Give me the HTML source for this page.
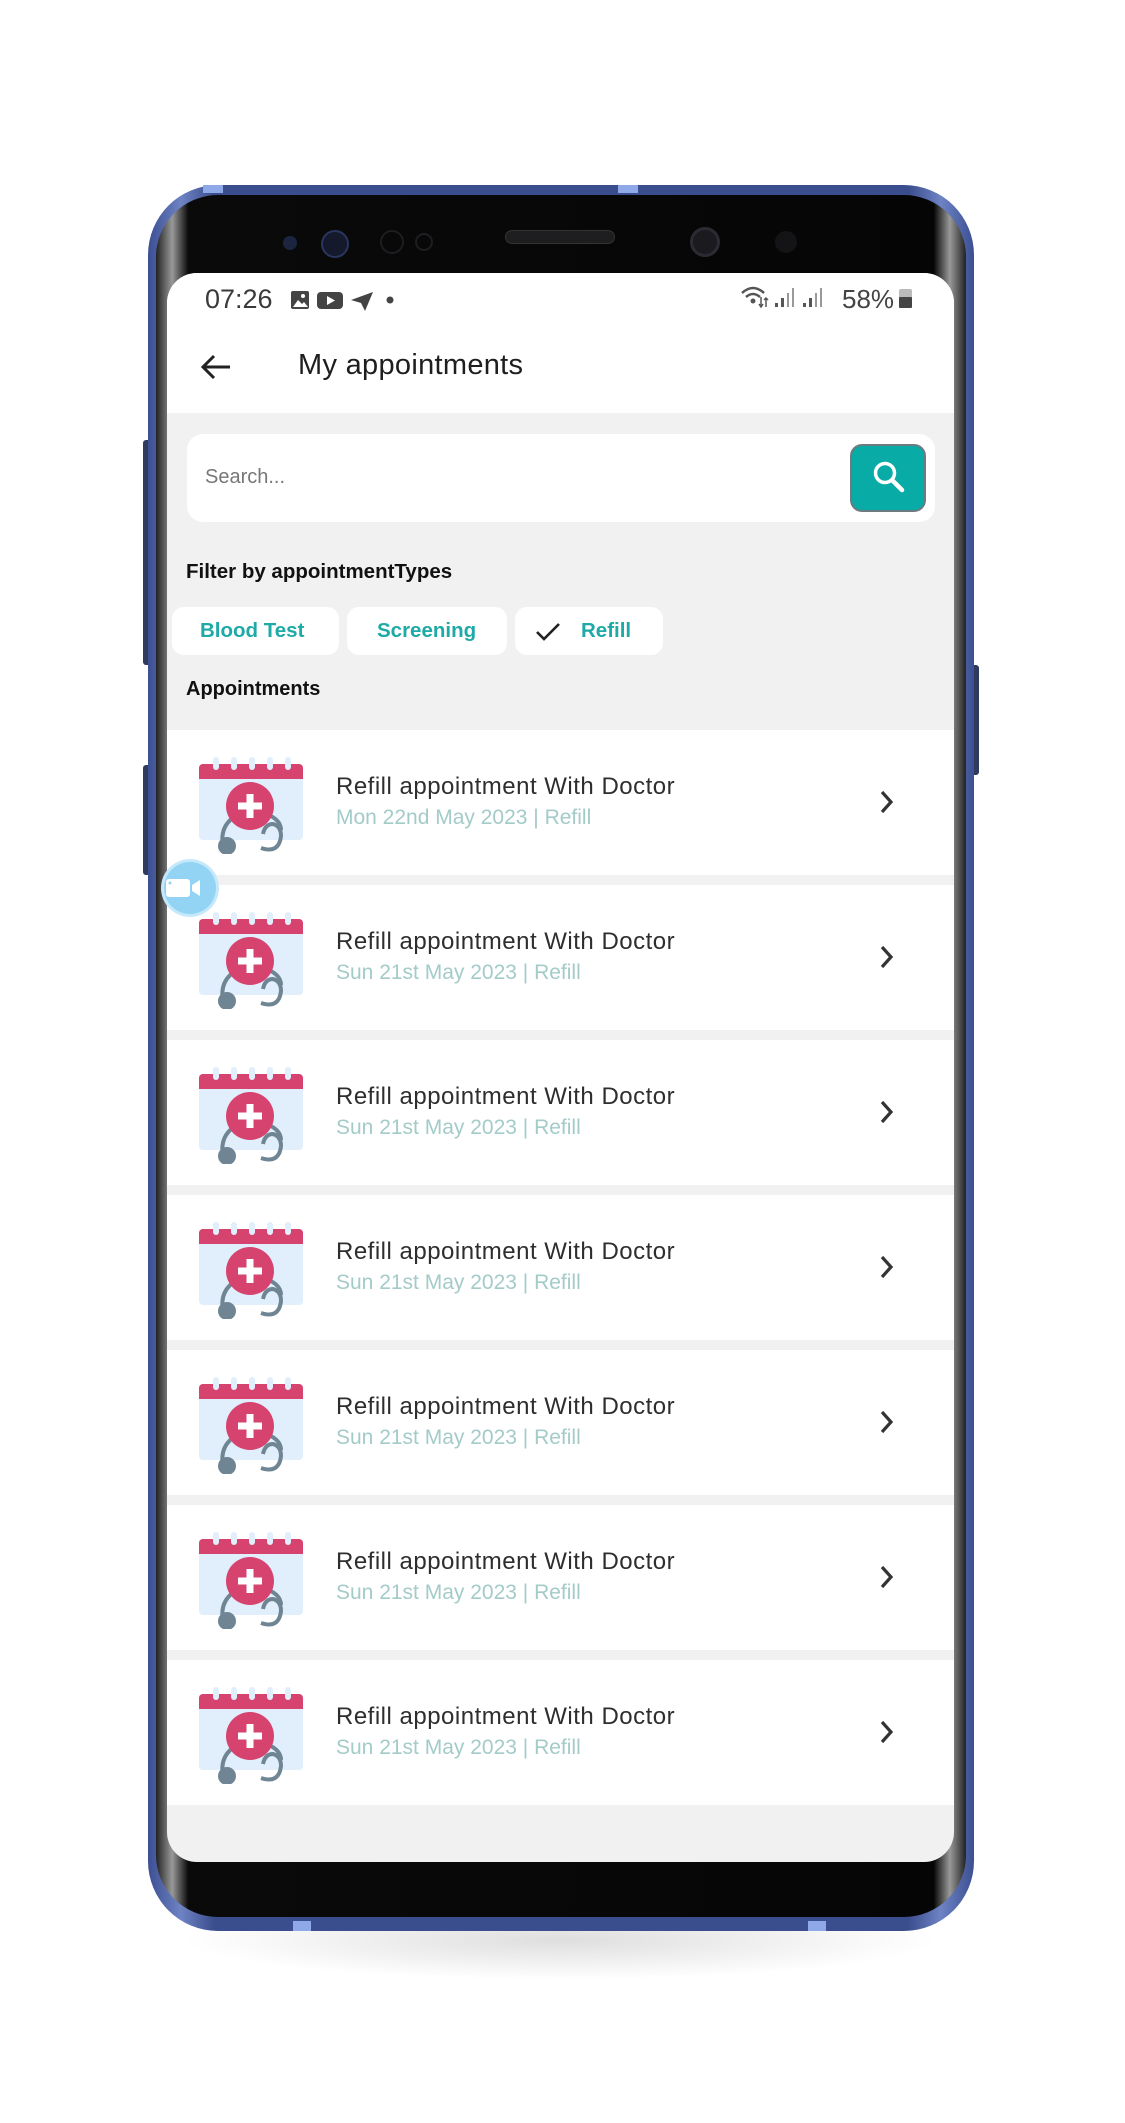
<!DOCTYPE html>
<html><head><meta charset="utf-8">
<style>
*{margin:0;padding:0;box-sizing:border-box}
body{width:1125px;height:2123px;background:#fff;position:relative;overflow:hidden;font-family:"Liberation Sans",sans-serif}
.shadow{position:absolute;left:180px;top:1900px;width:760px;height:80px;border-radius:50%;background:radial-gradient(ellipse at center,rgba(0,0,0,.13),rgba(0,0,0,0) 70%)}
.phone{position:absolute;left:148px;top:185px;width:826px;height:1746px;border-radius:70px;background:linear-gradient(90deg,#3b4f92,#6e83c4 4%,#3a4d8d 8%,#3a4d8d 92%,#6e83c4 96%,#3b4f92);}
.bez{position:absolute;left:8px;top:10px;right:8px;bottom:14px;border-radius:62px;background:linear-gradient(90deg,#222,#999 2%,#0a0a0a 4%,#050505 96%,#999 98%,#222);}
.btn{position:absolute;background:#2e3a5e;border-radius:3px}
.screen{position:absolute;left:167px;top:273px;width:787px;height:1589px;border-radius:30px;background:#f1f1f1;overflow:hidden}
.status{position:absolute;left:0;top:0;width:100%;height:140px;background:#fff}
.t{position:absolute;white-space:nowrap}
.item{position:absolute;left:0;width:787px;height:145px;background:#fff}
.item .ti{position:absolute;left:169px;top:43px;font-size:24px;color:#2e2e2e;letter-spacing:.5px}
.item .su{position:absolute;left:169px;top:76px;font-size:21px;color:#a3cbc8}
.item svg.ic{position:absolute;left:32px;top:24px}
.item svg.ch{position:absolute;left:710px;top:58px}
.chip{position:absolute;top:334px;height:48px;background:#fff;border-radius:12px;color:#1eaaa6;font-weight:bold;font-size:20.5px;line-height:48px}
</style></head><body>
<div class="shadow"></div>
<div class="btn" style="left:143px;top:440px;width:8px;height:225px"></div>
<div class="btn" style="left:143px;top:765px;width:8px;height:110px"></div>
<div class="btn" style="left:971px;top:665px;width:8px;height:110px"></div>
<div class="phone"><div class="bez"></div>
<div style="position:absolute;left:55px;top:0;width:20px;height:8px;background:#8fa8e8"></div>
<div style="position:absolute;left:470px;top:0;width:20px;height:8px;background:#8fa8e8"></div>
<div style="position:absolute;left:145px;bottom:0;width:18px;height:10px;background:#8fa8e8"></div>
<div style="position:absolute;left:660px;bottom:0;width:18px;height:10px;background:#8fa8e8"></div>
</div>
<div style="position:absolute;left:283px;top:236px;width:14px;height:14px;border-radius:50%;background:#1c2540"></div>
<div style="position:absolute;left:321px;top:230px;width:28px;height:28px;border-radius:50%;background:#141a2c;border:2px solid #2a3560"></div>
<div style="position:absolute;left:380px;top:230px;width:24px;height:24px;border-radius:50%;border:2px solid #1d1d22"></div>
<div style="position:absolute;left:415px;top:233px;width:18px;height:18px;border-radius:50%;border:2px solid #1d1d22"></div>
<div style="position:absolute;left:505px;top:230px;width:110px;height:14px;border-radius:7px;background:#1e1e20;border:1px solid #333"></div>
<div style="position:absolute;left:690px;top:227px;width:30px;height:30px;border-radius:50%;background:#1a1a1f;border:3px solid #2b2b33"></div>
<div style="position:absolute;left:775px;top:231px;width:22px;height:22px;border-radius:50%;background:#141416"></div>

<div class="screen">
<div class="status"></div>
<div class="t" style="left:38px;top:11px;font-size:27px;color:#3a3a3a">07:26</div>
<svg style="position:absolute;left:122px;top:16px" width="120" height="24" viewBox="0 0 120 24">
<rect x="2" y="2" width="18" height="18" rx="2" fill="#444"/><path d="M4 18 L9 11 L13 15 L15 13 L19 18Z" fill="#fff"/><circle cx="14" cy="7" r="2" fill="#fff"/>
<rect x="28" y="3" width="26" height="17" rx="4" fill="#444"/><path d="M38 7 L46 11.5 L38 16Z" fill="#fff"/>
<path d="M62 11 L84 3 L76 22 L72 14Z" fill="#444"/>
<circle cx="101" cy="11" r="3.5" fill="#444"/></svg>
<svg style="position:absolute;left:572px;top:10px" width="210" height="30" viewBox="0 0 210 30">
<path d="M3 10 Q14 0 25 10" stroke="#555" stroke-width="2.5" fill="none"/><path d="M7 14 Q14 8 21 14" stroke="#555" stroke-width="2.5" fill="none"/><circle cx="14" cy="18" r="2.5" fill="#555"/>
<path d="M22 14v10M20 21l2 3 2-3M27 24v-9M25 17l2-2 2 2" stroke="#555" stroke-width="1.5" fill="none"/>
<rect x="36" y="20" width="3" height="4" fill="#555"/><rect x="42" y="15" width="3" height="9" fill="#555"/><rect x="48" y="10" width="2" height="14" fill="#999"/><rect x="53" y="5" width="2" height="19" fill="#999"/>
<rect x="64" y="20" width="3" height="4" fill="#555"/><rect x="70" y="15" width="3" height="9" fill="#555"/><rect x="76" y="10" width="2" height="14" fill="#999"/><rect x="81" y="5" width="2" height="19" fill="#999"/>
<text x="103" y="25" font-family="Liberation Sans" font-size="26" fill="#444">58%</text>
<rect x="160" y="6" width="13" height="19" rx="2" fill="#bbb"/><rect x="160" y="14" width="13" height="11" rx="1" fill="#444"/></svg>
<svg style="position:absolute;left:32px;top:80px" width="34" height="28" viewBox="0 0 34 28"><path d="M31 14H4M15 3L4 14l11 11" stroke="#222" stroke-width="3" fill="none"/></svg>
<div class="t" style="left:131px;top:76px;font-size:29px;color:#1e1e1e;letter-spacing:.3px">My appointments</div>
<div style="position:absolute;left:20px;top:161px;width:748px;height:88px;background:#fff;border-radius:16px"></div>
<div class="t" style="left:38px;top:193px;font-size:20px;color:#777">Search...</div>
<div style="position:absolute;left:683px;top:171px;width:76px;height:68px;background:#08aba5;border-radius:12px;border:2px solid #6b7b80"></div>
<svg style="position:absolute;left:704px;top:186px" width="36" height="36" viewBox="0 0 36 36"><circle cx="14" cy="14" r="9.5" stroke="#fff" stroke-width="3.5" fill="none"/><path d="M21 21 L31 31" stroke="#fff" stroke-width="4.5" stroke-linecap="round"/></svg>
<div class="t" style="left:19px;top:287px;font-size:20.5px;font-weight:bold;color:#111">Filter by appointmentTypes</div>
<div class="chip" style="left:5px;width:167px;padding-left:28px">Blood Test</div>
<div class="chip" style="left:180px;width:160px;padding-left:30px">Screening</div>
<div class="chip" style="left:348px;width:148px;padding-left:66px">Refill</div>
<svg style="position:absolute;left:368px;top:348px" width="28" height="22" viewBox="0 0 28 22"><path d="M2 11 L9 18 L24 3" stroke="#222" stroke-width="2.6" fill="none"/></svg>
<div class="t" style="left:19px;top:405px;font-size:20px;font-weight:bold;color:#111">Appointments</div>

<div id="list"></div>
</div>
<div style="position:absolute;left:164px;top:862px;width:52px;height:52px;border-radius:50%;background:#93d3f4;box-shadow:0 0 0 3px #c5e9fb"></div>
<svg style="position:absolute;left:166px;top:876px" width="40" height="24" viewBox="0 0 40 24"><rect x="0" y="3" width="24" height="18" rx="3" fill="#fff"/><path d="M26 9 L34 4 V20 L26 15Z" fill="#fff"/><circle cx="4" cy="7" r="1.5" fill="#93d3f4"/></svg>

<script>
var icon='<svg class="ic" width="106" height="100" viewBox="0 0 106 100"><rect x="0" y="10" width="104" height="76" rx="4" fill="#e1eefb"/><path d="M0 14a4 4 0 0 1 4-4h96a4 4 0 0 1 4 4v11H0Z" fill="#d6436f"/><g fill="#e1eefb"><rect x="14" y="3" width="6" height="13" rx="3"/><rect x="32" y="3" width="6" height="13" rx="3"/><rect x="50" y="3" width="6" height="13" rx="3"/><rect x="68" y="3" width="6" height="13" rx="3"/><rect x="86" y="3" width="6" height="13" rx="3"/></g><path d="M40 60 Q20 70 24 92" stroke="#6f8593" stroke-width="4" fill="none"/><path d="M62 58 Q82 64 82 76" stroke="#6f8593" stroke-width="4" fill="none"/><path d="M62 94 Q80 100 82 82 Q82 72 74 70 Q66 70 64 80" stroke="#6f8593" stroke-width="4" fill="none"/><circle cx="28" cy="92" r="9" fill="#6f8593"/><circle cx="51" cy="52" r="24" fill="#d6436f"/><path d="M51 40v24M39 52h24" stroke="#fff" stroke-width="7"/></svg>';
var ch='<svg class="ch" width="20" height="28" viewBox="0 0 20 28"><path d="M5 4 L14 14 L5 24" stroke="#333" stroke-width="3.2" fill="none"/></svg>';
var h='';
for(var i=0;i<7;i++){var d=i==0?'Mon 22nd May 2023 | Refill':'Sun 21st May 2023 | Refill';
h+='<div class="item" style="top:'+(457+i*155)+'px">'+icon+'<div class="t ti">Refill appointment With Doctor</div><div class="t su">'+d+'</div>'+ch+'</div>';}
document.getElementById('list').innerHTML=h;
</script>
</body></html>
